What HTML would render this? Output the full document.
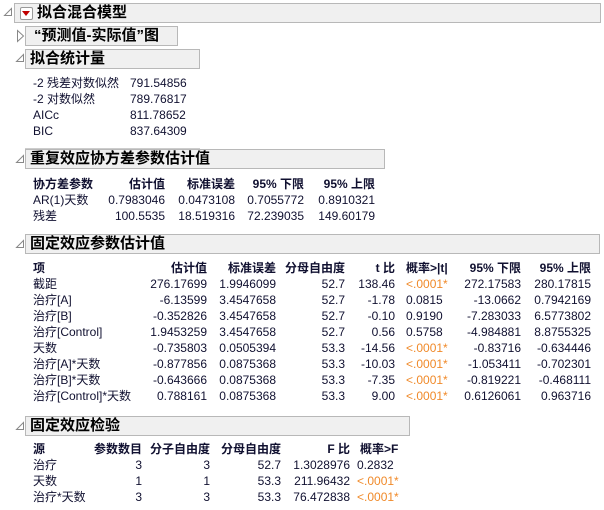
<!DOCTYPE html>
<html><head><meta charset="utf-8"><style>
body{margin:0;width:604px;height:510px;background:#fff;position:relative;overflow:hidden;font-family:"Liberation Sans","Noto Sans CJK SC",sans-serif;font-size:12px;color:#101030}
.a{position:absolute;white-space:nowrap;line-height:16px}
.b{font-weight:bold}
.o{color:#f08a2a}
.box{position:absolute;background:#f0f0f0;border:1px solid #b8b8b8;font-weight:bold;font-size:15px;line-height:18px;padding-left:4px;box-sizing:border-box;color:#000}
svg.t{position:absolute}
</style></head><body>
<svg class="t" style="left:3px;top:7px" width="10" height="10"><path d="M8.5 1.5 L8.5 8.5 L1.5 8.5 Z" fill="#fff" stroke="#888"/></svg>
<div class="box" style="left:14px;top:3px;width:587px;height:20px;padding-left:22px">拟合混合模型</div>
<div style="position:absolute;left:20px;top:7px;width:11px;height:11px;border:1px solid #999;background:#fff;border-radius:2px"></div>
<div style="position:absolute;left:22px;top:11px;width:0;height:0;border-left:4px solid transparent;border-right:4px solid transparent;border-top:5px solid #c00000"></div>
<svg class="t" style="left:16px;top:29px" width="10" height="14"><path d="M1.5 1.5 L7.5 7 L1.5 12.5 Z" fill="#fff" stroke="#888"/></svg>
<div class="box" style="left:25px;top:26px;width:153px;height:20px;padding-left:8px">“预测值-实际值”图</div>
<svg class="t" style="left:15px;top:53px" width="10" height="10"><path d="M8.5 1.5 L8.5 8.5 L1.5 8.5 Z" fill="#fff" stroke="#888"/></svg>
<div class="box" style="left:25px;top:49px;width:175px;height:20px">拟合统计量</div>
<div class="a" style="left:33px;top:75px">-2 残差对数似然</div><div class="a" style="left:130px;top:75px">791.54856</div>
<div class="a" style="left:33px;top:91px">-2 对数似然</div><div class="a" style="left:130px;top:91px">789.76817</div>
<div class="a" style="left:33px;top:107px">AICc</div><div class="a" style="left:130px;top:107px">811.78652</div>
<div class="a" style="left:33px;top:123px">BIC</div><div class="a" style="left:130px;top:123px">837.64309</div>
<div style="position:absolute;left:25px;top:148px;width:175px;height:1px;background:#ccc"></div>

<svg class="t" style="left:15px;top:154px" width="10" height="10"><path d="M8.5 1.5 L8.5 8.5 L1.5 8.5 Z" fill="#fff" stroke="#888"/></svg>
<div class="box" style="left:25px;top:149px;width:360px;height:20px">重复效应协方差参数估计值</div>
<div class="a b" style="left:33px;top:176px">协方差参数</div>
<div class="a b" style="right:439px;top:176px">估计值</div>
<div class="a b" style="right:369px;top:176px">标准误差</div>
<div class="a b" style="right:300px;top:176px">95% 下限</div>
<div class="a b" style="right:229px;top:176px">95% 上限</div>
<div class="a" style="left:33px;top:192px">AR(1)天数</div>
<div class="a" style="right:439px;top:192px">0.7983046</div><div class="a" style="right:369px;top:192px">0.0473108</div><div class="a" style="right:300px;top:192px">0.7055772</div><div class="a" style="right:229px;top:192px">0.8910321</div>
<div class="a" style="left:33px;top:208px">残差</div>
<div class="a" style="right:439px;top:208px">100.5535</div><div class="a" style="right:369px;top:208px">18.519316</div><div class="a" style="right:300px;top:208px">72.239035</div><div class="a" style="right:229px;top:208px">149.60179</div>

<svg class="t" style="left:15px;top:239px" width="10" height="10"><path d="M8.5 1.5 L8.5 8.5 L1.5 8.5 Z" fill="#fff" stroke="#888"/></svg>
<div class="box" style="left:25px;top:234px;width:575px;height:20px">固定效应参数估计值</div>
<div class="a b" style="left:33px;top:260px">项</div>
<div class="a b" style="right:397px;top:260px">估计值</div>
<div class="a b" style="right:328px;top:260px">标准误差</div>
<div class="a b" style="right:259px;top:260px">分母自由度</div>
<div class="a b" style="right:209px;top:260px">t 比</div>
<div class="a b" style="left:406px;top:260px">概率&gt;|t|</div>
<div class="a b" style="right:83px;top:260px">95% 下限</div>
<div class="a b" style="right:13px;top:260px">95% 上限</div>

<div class="a" style="left:33px;top:276px">截距</div><div class="a" style="right:397px;top:276px">276.17699</div><div class="a" style="right:328px;top:276px">1.9946099</div><div class="a" style="right:259px;top:276px">52.7</div><div class="a" style="right:209px;top:276px">138.46</div><div class="a o" style="left:406px;top:276px">&lt;.0001*</div><div class="a" style="right:83px;top:276px">272.17583</div><div class="a" style="right:13px;top:276px">280.17815</div>
<div class="a" style="left:33px;top:292px">治疗[A]</div><div class="a" style="right:397px;top:292px">-6.13599</div><div class="a" style="right:328px;top:292px">3.4547658</div><div class="a" style="right:259px;top:292px">52.7</div><div class="a" style="right:209px;top:292px">-1.78</div><div class="a" style="left:406px;top:292px">0.0815</div><div class="a" style="right:83px;top:292px">-13.0662</div><div class="a" style="right:13px;top:292px">0.7942169</div>
<div class="a" style="left:33px;top:308px">治疗[B]</div><div class="a" style="right:397px;top:308px">-0.352826</div><div class="a" style="right:328px;top:308px">3.4547658</div><div class="a" style="right:259px;top:308px">52.7</div><div class="a" style="right:209px;top:308px">-0.10</div><div class="a" style="left:406px;top:308px">0.9190</div><div class="a" style="right:83px;top:308px">-7.283033</div><div class="a" style="right:13px;top:308px">6.5773802</div>
<div class="a" style="left:33px;top:324px">治疗[Control]</div><div class="a" style="right:397px;top:324px">1.9453259</div><div class="a" style="right:328px;top:324px">3.4547658</div><div class="a" style="right:259px;top:324px">52.7</div><div class="a" style="right:209px;top:324px">0.56</div><div class="a" style="left:406px;top:324px">0.5758</div><div class="a" style="right:83px;top:324px">-4.984881</div><div class="a" style="right:13px;top:324px">8.8755325</div>
<div class="a" style="left:33px;top:340px">天数</div><div class="a" style="right:397px;top:340px">-0.735803</div><div class="a" style="right:328px;top:340px">0.0505394</div><div class="a" style="right:259px;top:340px">53.3</div><div class="a" style="right:209px;top:340px">-14.56</div><div class="a o" style="left:406px;top:340px">&lt;.0001*</div><div class="a" style="right:83px;top:340px">-0.83716</div><div class="a" style="right:13px;top:340px">-0.634446</div>
<div class="a" style="left:33px;top:356px">治疗[A]*天数</div><div class="a" style="right:397px;top:356px">-0.877856</div><div class="a" style="right:328px;top:356px">0.0875368</div><div class="a" style="right:259px;top:356px">53.3</div><div class="a" style="right:209px;top:356px">-10.03</div><div class="a o" style="left:406px;top:356px">&lt;.0001*</div><div class="a" style="right:83px;top:356px">-1.053411</div><div class="a" style="right:13px;top:356px">-0.702301</div>
<div class="a" style="left:33px;top:372px">治疗[B]*天数</div><div class="a" style="right:397px;top:372px">-0.643666</div><div class="a" style="right:328px;top:372px">0.0875368</div><div class="a" style="right:259px;top:372px">53.3</div><div class="a" style="right:209px;top:372px">-7.35</div><div class="a o" style="left:406px;top:372px">&lt;.0001*</div><div class="a" style="right:83px;top:372px">-0.819221</div><div class="a" style="right:13px;top:372px">-0.468111</div>
<div class="a" style="left:33px;top:388px">治疗[Control]*天数</div><div class="a" style="right:397px;top:388px">0.788161</div><div class="a" style="right:328px;top:388px">0.0875368</div><div class="a" style="right:259px;top:388px">53.3</div><div class="a" style="right:209px;top:388px">9.00</div><div class="a o" style="left:406px;top:388px">&lt;.0001*</div><div class="a" style="right:83px;top:388px">0.6126061</div><div class="a" style="right:13px;top:388px">0.963716</div>

<svg class="t" style="left:15px;top:421px" width="10" height="10"><path d="M8.5 1.5 L8.5 8.5 L1.5 8.5 Z" fill="#fff" stroke="#888"/></svg>
<div class="box" style="left:25px;top:416px;width:385px;height:20px">固定效应检验</div>
<div class="a b" style="left:33px;top:441px">源</div>
<div class="a b" style="right:462px;top:441px">参数数目</div>
<div class="a b" style="right:394px;top:441px">分子自由度</div>
<div class="a b" style="right:323px;top:441px">分母自由度</div>
<div class="a b" style="right:254px;top:441px">F 比</div>
<div class="a b" style="left:360px;top:441px">概率&gt;F</div>
<div class="a" style="left:33px;top:457px">治疗</div><div class="a" style="right:462px;top:457px">3</div><div class="a" style="right:394px;top:457px">3</div><div class="a" style="right:323px;top:457px">52.7</div><div class="a" style="right:254px;top:457px">1.3028976</div><div class="a" style="left:357px;top:457px">0.2832</div>
<div class="a" style="left:33px;top:473px">天数</div><div class="a" style="right:462px;top:473px">1</div><div class="a" style="right:394px;top:473px">1</div><div class="a" style="right:323px;top:473px">53.3</div><div class="a" style="right:254px;top:473px">211.96432</div><div class="a o" style="left:357px;top:473px">&lt;.0001*</div>
<div class="a" style="left:33px;top:489px">治疗*天数</div><div class="a" style="right:462px;top:489px">3</div><div class="a" style="right:394px;top:489px">3</div><div class="a" style="right:323px;top:489px">53.3</div><div class="a" style="right:254px;top:489px">76.472838</div><div class="a o" style="left:357px;top:489px">&lt;.0001*</div>
</body></html>
